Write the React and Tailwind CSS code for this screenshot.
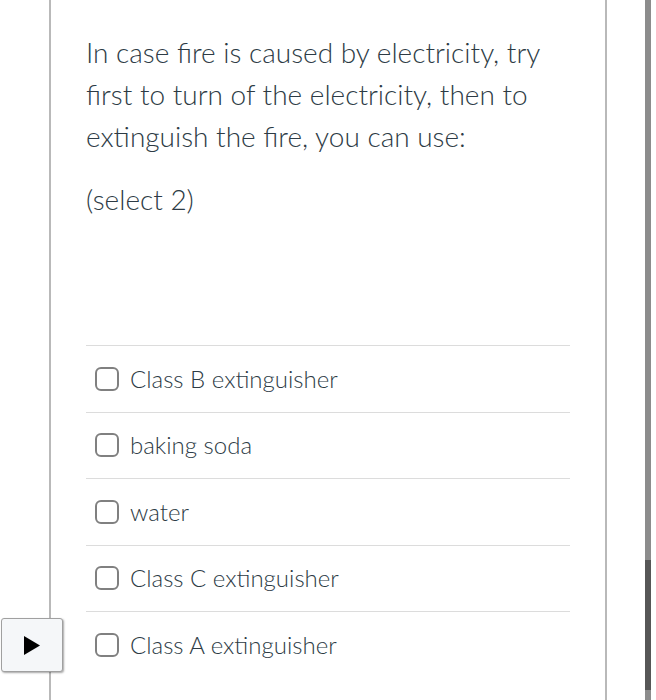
const options = ['Class B extinguisher', 'baking soda', 'water', 'Class C extinguisher', 'Class A extinguisher'];

export default function App() {
  return (
    <div className="relative w-[656px] h-[700px] overflow-hidden bg-white text-[#2d3b45] font-light" style={{ fontFamily: 'Lato, "Open Sans", sans-serif' }}>
      <div className="ml-[49px] w-[558px] h-[700px] border-x-2 border-[#b9b9b9] px-[35px] pt-[31px]">
        <p className="text-[28px] leading-[42px] mb-[21px]">
          In case fire is caused by electricity, try first to turn of the electricity, then to extinguish the fire, you can use:
        </p>
        <p className="text-[28px] leading-[42px]">(select 2)</p>
        <div className="mt-[125px]">
          {options.map((o) => (
            <div key={o} className="h-[66.5px] border-t border-[#dcdcdc] flex items-center pl-[9px] gap-[11px]">
              <span className="w-[24px] h-[24px] border-2 border-[#808080] rounded-[6px] shrink-0" />
              <span className="text-[24px]">{o}</span>
            </div>
          ))}
        </div>
      </div>

      <div className="absolute left-[1px] top-[618px] w-[62px] h-[54px] bg-[#f5f7f9] border border-[#a0a0a0] rounded-[3px] shadow-[1px_1px_2px_rgba(0,0,0,0.35)] flex items-center justify-center">
        <svg width="16" height="19" viewBox="0 0 16 19">
          <polygon points="0,0 16,9.5 0,19" fill="#000" />
        </svg>
      </div>

      <div className="absolute left-[645px] top-0 w-[6px] h-[700px] bg-[#8c8c8c]">
        <div className="mt-[560px] h-[130px] bg-[#565656]" />
      </div>
    </div>
  );
}
